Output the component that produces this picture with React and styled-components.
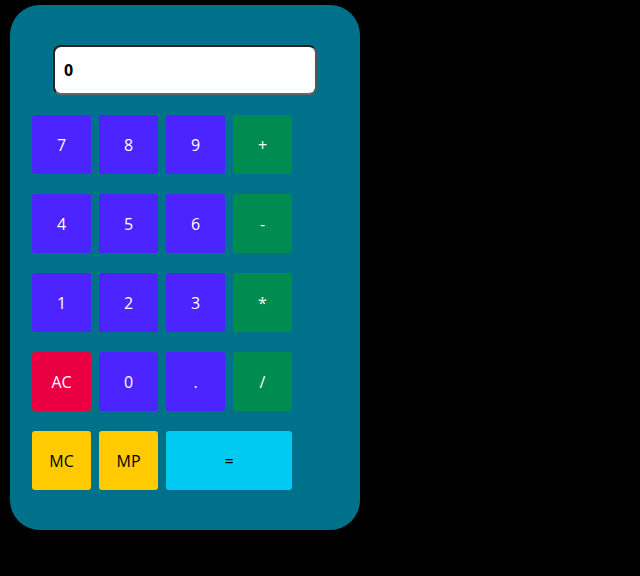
import React from 'react';
import styled, { createGlobalStyle } from 'styled-components';

const Global = createGlobalStyle`
  html, body {
    margin: 0;
    background: #000;
    font-family: "Open Sans", "DejaVu Sans", sans-serif;
  }
`;

const colors = {
  num: '#4b24ff',
  op: '#008b50',
  clear: '#ea0042',
  mem: '#ffcb00',
  eq: '#00c9f2',
};

const Card = styled.div`
  width: 350px;
  height: 525px;
  box-sizing: border-box;
  margin: 5px 0 0 10px;
  padding: 40px 22px 0;
  background: #00718a;
  border-radius: 30px;
  display: flex;
  flex-direction: column;
  gap: 20px;
`;

const Display = styled.div`
  align-self: center;
  width: 264px;
  height: 50px;
  box-sizing: border-box;
  background: #fff;
  border: 2px solid #222;
  border-bottom-color: #666;
  border-right-color: #555;
  border-radius: 8px;
  padding-left: 9px;
  display: flex;
  align-items: center;
  font-weight: 700;
  font-size: 16px;
  color: #000;
`;

const Keys = styled.div`
  display: grid;
  grid-template-columns: repeat(4, 59px);
  grid-auto-rows: 59px;
  column-gap: 8px;
  row-gap: 20px;
`;

const Key = styled.button`
  border: none;
  border-radius: 3px;
  padding: 0;
  background: ${p => colors[p.$kind]};
  color: ${p => (p.$kind === 'mem' || p.$kind === 'eq' ? '#000' : '#fff')};
  font-family: inherit;
  font-size: 16px;
  grid-column: span ${p => p.$span || 1};
`;

const rows = [
  [['7', 'num'], ['8', 'num'], ['9', 'num'], ['+', 'op']],
  [['4', 'num'], ['5', 'num'], ['6', 'num'], ['-', 'op']],
  [['1', 'num'], ['2', 'num'], ['3', 'num'], ['*', 'op']],
  [['AC', 'clear'], ['0', 'num'], ['.', 'num'], ['/', 'op']],
  [['MC', 'mem'], ['MP', 'mem'], ['=', 'eq', 2]],
];

const App = () => {
  return (
    <>
      <Global />
      <Card>
        <Display>0</Display>
        <Keys>
          {rows.flat().map(([label, kind, span], i) => (
            <Key key={i} $kind={kind} $span={span}>{label}</Key>
          ))}
        </Keys>
      </Card>
    </>
  );
};

export default App;
